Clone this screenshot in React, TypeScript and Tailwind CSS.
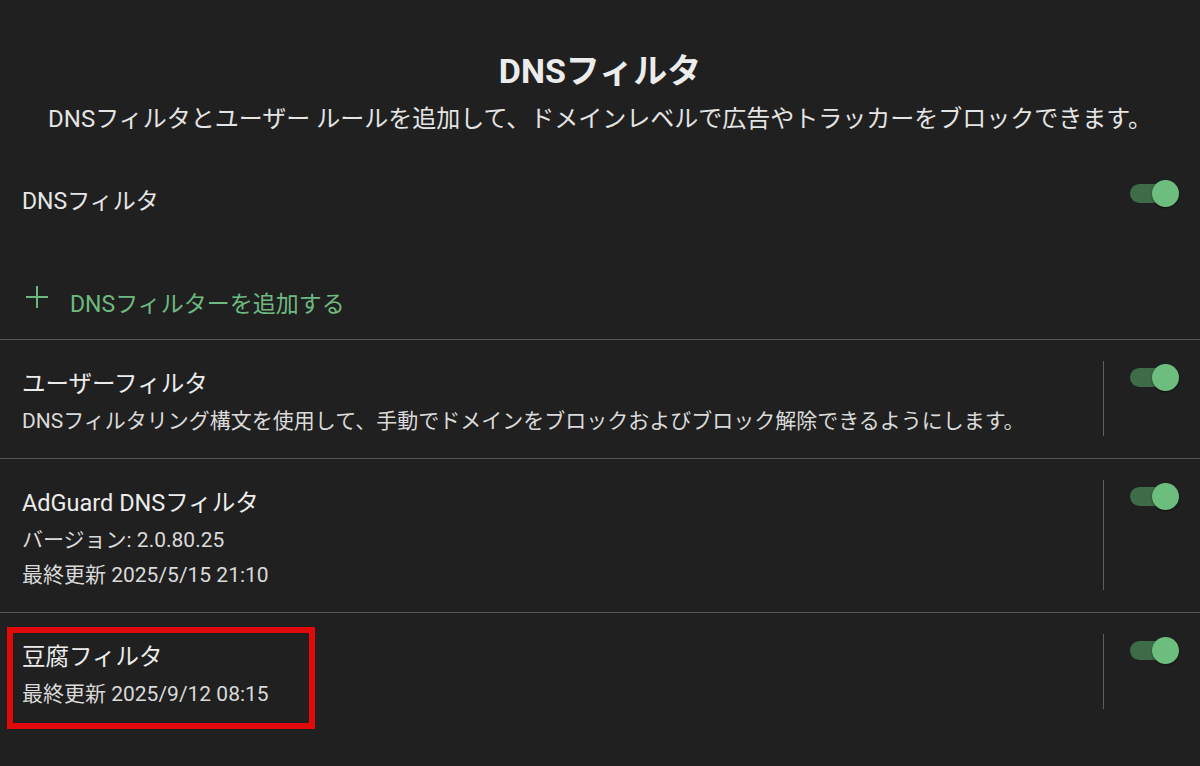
import React from "react";

function Toggle() {
  return (
    <div className="relative w-[49px] h-[27px] shrink-0">
      <div className="absolute left-0 top-[4px] w-[40px] h-[19px] rounded-full bg-[#3e6b48]" />
      <div className="absolute right-0 top-0 w-[27px] h-[27px] rounded-full bg-[#6dbd7f] shadow-[0_1px_2px_rgba(0,0,0,0.5)]" />
    </div>
  );
}

function PlusIcon() {
  return (
    <svg width="24" height="24" viewBox="0 0 24 24" className="shrink-0 mt-[2px]">
      <path d="M12 1v22M1 12h22" stroke="#6db87c" strokeWidth="2" fill="none" />
    </svg>
  );
}

interface FilterRow {
  title: string;
  lines: string[];
  highlight?: boolean;
}

const rows: FilterRow[] = [
  {
    title: "ユーザーフィルタ",
    lines: ["DNSフィルタリング構文を使用して、手動でドメインをブロックおよびブロック解除できるようにします。"],
  },
  {
    title: "AdGuard DNSフィルタ",
    lines: ["バージョン: 2.0.80.25", "最終更新 2025/5/15 21:10"],
  },
  {
    title: "豆腐フィルタ",
    lines: ["最終更新 2025/9/12 08:15"],
    highlight: true,
  },
];

export default function App() {
  return (
    <div
      className="w-[1200px] min-h-[766px] bg-[#202020] text-[#e6e6e6]"
      style={{ fontFamily: 'Roboto, "Noto Sans CJK JP", sans-serif' }}
    >
      {/* Header */}
      <header className="pt-[49px] text-center">
        <h1 className="text-[34px] font-bold leading-[44px] text-[#ececec]">DNSフィルタ</h1>
        <p className="mt-[8px] text-[24px] leading-[36px] text-[#e4e4e4]">
          DNSフィルタとユーザー ルールを追加して、ドメインレベルで広告やトラッカーをブロックできます。
        </p>
      </header>

      {/* Main switch */}
      <div className="flex items-start justify-between pl-[22px] pr-[21px] pt-[43px]">
        <span className="mt-[2px] text-[23px] leading-[40px]">DNSフィルタ</span>
        <Toggle />
      </div>

      {/* Add filter */}
      <div className="flex items-start gap-[21px] pl-[25px] mt-[61px] pb-[14px] text-[#6fb980]">
        <PlusIcon />
        <span className="pt-[2px] text-[23px] leading-[40px]">DNSフィルターを追加する</span>
      </div>

      {/* Filter list */}
      {rows.map((row) => (
        <div
          key={row.title}
          className="relative flex items-stretch border-t border-[#565656] pt-[21px] pb-[22px]"
        >
          <div className="flex-1 pl-[22px] pt-[3px] -mb-[3px]">
            <div className="text-[23.5px] leading-[40px] text-[#ececec]">{row.title}</div>
            {row.lines.map((l) => (
              <div key={l} className="text-[21px] leading-[35px] text-[#dadada]">
                {l}
              </div>
            ))}
          </div>
          <div className="flex items-start pr-[21px]">
            <div className="self-stretch w-px bg-[#5e5e5e]" />
            <div className="ml-[26px] mt-[3px]">
              <Toggle />
            </div>
          </div>
          {row.highlight && (
            <div className="absolute left-[7px] top-[14px] w-[308px] h-[102px] border-[6px] border-[#e10a0a]" />
          )}
        </div>
      ))}
    </div>
  );
}
